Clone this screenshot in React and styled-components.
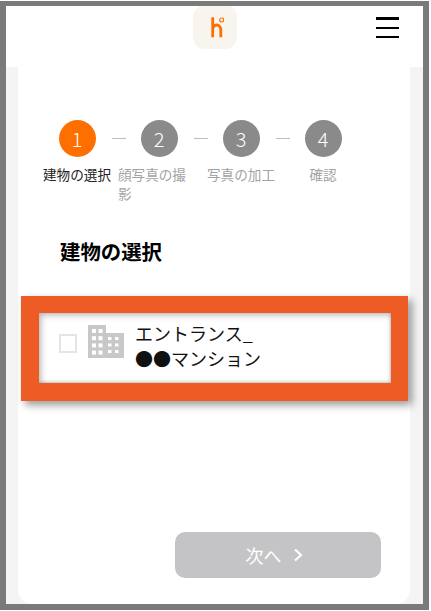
import React from 'react'
import styled, { createGlobalStyle } from 'styled-components'

const Global = createGlobalStyle`
  html, body { margin: 0; padding: 0; background: #fff; }
  body { font-family: "Noto Sans CJK JP", "Noto Sans", sans-serif; }
`

const Frame = styled.div`
  box-sizing: border-box;
  width: 429px;
  height: 609px;
  margin-top: 1px;
  border: 6px solid #7a7a7a;
  border-top-width: 5px;
  background: #fff;
  display: flex;
  flex-direction: column;
  overflow: hidden;
`

const Header = styled.header`
  height: 61px;
  flex: none;
  display: grid;
  grid-template-columns: 1fr auto 1fr;
`

const Logo = styled.div`
  width: 44px;
  height: 44px;
  margin-top: -1px;
  border-radius: 12px;
  background: #f8f5ee;
  display: flex;
  align-items: center;
  justify-content: center;
`

const Burger = styled.div`
  justify-self: end;
  width: 23px;
  margin: 11px 24px 0 0;
  display: flex;
  flex-direction: column;
  gap: 7px;
`

const BurgerLine = styled.span`
  height: 2px;
  background: #000;

  &:first-child {
    height: 3px;
  }
`

const Backdrop = styled.div`
  flex: 1;
  background: #f4f4f4;
  padding: 0 13px 0 12px;
  display: flex;
`

const Card = styled.main`
  flex: 1;
  background: #fff;
  border-radius: 0 0 14px 14px;
  display: flex;
  flex-direction: column;
`

const Steps = styled.ol`
  list-style: none;
  margin: 53px 0 0;
  padding: 0 0 0 18px;
  display: grid;
  grid-template-columns: repeat(4, 82px);
`

const Step = styled.li`
  display: flex;
  flex-direction: column;
  align-items: center;
  position: relative;
`

const Dash = styled.span`
  position: absolute;
  left: 76px;
  top: 18px;
  width: 14px;
  height: 1px;
  background: #bdbdbd;
`

const Circle = styled.span`
  width: 37px;
  height: 37px;
  border-radius: 50%;
  background: ${p => (p.$active ? '#ff6f00' : '#8a8a8a')};
  color: #fff;
  font-size: 20px;
  font-weight: 300;
  line-height: 37px;
  text-align: center;
`

const StepLabel = styled.span`
  box-sizing: border-box;
  margin-top: 8px;
  width: 100%;
  padding-right: ${p => (p.$wrap ? '4px' : '0')};
  font-size: 13.6px;
  line-height: 19px;
  color: ${p => (p.$active ? '#222' : '#a3a3a3')};
  text-align: ${p => (p.$wrap ? 'left' : 'center')};
`

const Title = styled.h2`
  margin: 33px 0 0 42px;
  font-size: 20.4px;
  line-height: 30px;
  font-weight: 700;
  color: #000;
`

const Highlight = styled.section`
  box-sizing: border-box;
  margin: 30px 2px 0 3px;
  height: 105px;
  border: 17px solid #ec5c24;
  border-left-width: 18px;
  border-bottom-width: 18px;
  box-shadow: 4px 4px 8px rgba(0, 0, 0, 0.4), inset 2px 2px 6px rgba(0, 0, 0, 0.28), inset -1px -1px 3px rgba(0, 0, 0, 0.18);
  background: #fff;
  display: flex;
  align-items: flex-start;
`

const CheckBox = styled.span`
  flex: none;
  box-sizing: border-box;
  width: 18px;
  height: 19px;
  margin: 21px 0 0 20px;
  border: 2px solid #e4e4e4;
`

const Building = styled.svg`
  flex: none;
  margin: 12px 0 0 11px;
`

const ItemName = styled.div`
  margin: 8px 0 0 11px;
  font-size: 18px;
  line-height: 25px;
  color: #111;
`

const Footer = styled.div`
  margin-top: auto;
  padding: 0 29px 26px 0;
  display: flex;
  justify-content: flex-end;
`

const NextButton = styled.button`
  width: 206px;
  height: 46px;
  border: none;
  border-radius: 10px;
  background: #c4c4c6;
  color: #fff;
  font-family: inherit;
  font-size: 18px;
  display: flex;
  align-items: center;
  justify-content: center;
  gap: 11px;
  padding: 0 8px 0 0;
`

const steps = [
  { n: 1, label: '建物の選択', active: true },
  { n: 2, label: '顔写真の撮影', wrap: true },
  { n: 3, label: '写真の加工' },
  { n: 4, label: '確認' },
]

const BuildingIcon = () => (
  <Building width="36" height="33" viewBox="0 0 36 33">
    <path fill="#c8c8c8" d="M0 0h18v8h18v25H0z" />
    {[0, 1, 2, 3].map(r => [0, 1].map(c => (
      <rect key={`t${r}${c}`} x={4 + c * 6.500} y={4 + r * 7.200} width="4" height="4" fill="#fff" />
    )))}
    {[0, 1, 2].map(r => [0, 1].map(c => (
      <rect key={`w${r}${c}`} x={20 + c * 7} y={12 + r * 6.500} width="3.500" height="3" fill="#fff" />
    )))}
  </Building>
)

export default function App() {
  return (
    <>
      <Global />
      <Frame>
        <Header>
          <span />
          <Logo>
            <svg width="18" height="22" viewBox="0 0 18 22">
              <path d="M6.700 1.300V21.300M6.700 14c0-3 1.800-5 4-5s4.100 2 4.100 5v7.300" fill="none" stroke="#ff6f00" strokeWidth="2.800" />
              <circle cx="15.700" cy="4" r="2" fill="none" stroke="#ff6f00" strokeWidth="1.200" />
            </svg>
          </Logo>
          <Burger>
            <BurgerLine />
            <BurgerLine />
            <BurgerLine />
          </Burger>
        </Header>
        <Backdrop>
          <Card>
            <Steps>
              {steps.map((s, i) => (
                <Step key={s.n}>
                  <Circle $active={s.active}>{s.n}</Circle>
                  {i < 3 && <Dash />}
                  <StepLabel $active={s.active} $wrap={s.wrap}>{s.label}</StepLabel>
                </Step>
              ))}
            </Steps>
            <Title>建物の選択</Title>
            <Highlight>
              <CheckBox />
              <BuildingIcon />
              <ItemName>エントランス_<br />●●マンション</ItemName>
            </Highlight>
            <Footer>
              <NextButton>
                次へ
                <svg width="10" height="14" viewBox="0 0 10 14">
                  <path d="M2 1.500 8 7l-6 5.500" fill="none" stroke="#fff" strokeWidth="2.200" />
                </svg>
              </NextButton>
            </Footer>
          </Card>
        </Backdrop>
      </Frame>
    </>
  )
}
